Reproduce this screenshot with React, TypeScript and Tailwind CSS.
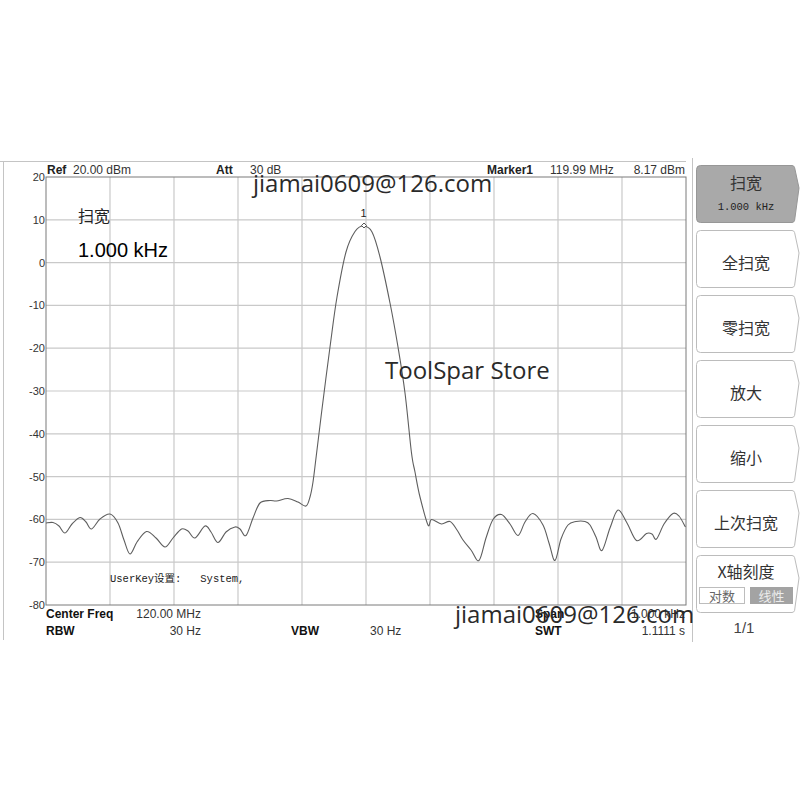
import React from "react"

// trace points in screen coordinates (px)
const TRACE: [number, number][] = [
  [46, 523], [53, 522.5], [59, 526], [65, 533], [72, 524], [80, 517.5], [86, 522], [91.5, 529],
  [100, 519], [110, 514], [118, 523], [124, 540], [130, 554], [137, 542], [146.5, 531.5],
  [156, 538], [165, 547], [173, 538], [181.5, 529], [188, 531], [195, 538], [205, 526],
  [211, 532], [218, 542.5], [226, 532], [235, 527], [240, 529], [246, 535.5], [253, 518],
  [260, 503], [270, 500.5], [276.5, 501], [288, 498.5], [298, 502], [306, 506], [310, 497],
  [313, 482], [316, 458], [321.5, 413], [330, 347], [337, 297], [346, 252], [355, 231.5],
  [363.5, 226], [372, 232], [380, 257], [390, 303], [398, 347],
  [405, 393], [411.5, 453], [415, 472], [420, 497], [428, 525], [431.5, 519.5], [441.5, 524],
  [450, 521.5], [457, 530], [463, 540], [471, 550], [479, 560.5], [486, 538], [493, 519.5],
  [501.5, 514.5], [510, 524], [518, 535.5], [525, 522], [533, 513.5], [543, 525], [549, 543],
  [555, 560.5], [561, 539], [568, 525], [576, 521.5], [585, 521.5], [590, 525], [596, 537],
  [602, 550.5], [610, 528], [618, 510], [627, 523], [636.5, 540.5], [646.5, 533.5], [652, 534],
  [656.5, 539], [664, 524], [673, 513.5], [679, 516], [685.5, 527],
]

function smoothPath(pts: [number, number][]) {
  let d = `M${pts[0][0]},${pts[0][1]}`
  for (let i = 0; i < pts.length - 1; i++) {
    const p0 = pts[i - 1] ?? pts[i]
    const p1 = pts[i]
    const p2 = pts[i + 1]
    const p3 = pts[i + 2] ?? p2
    const c1x = p1[0] + (p2[0] - p0[0]) / 6
    const c1y = p1[1] + (p2[1] - p0[1]) / 6
    const c2x = p2[0] - (p3[0] - p1[0]) / 6
    const c2y = p2[1] - (p3[1] - p1[1]) / 6
    d += ` C${c1x.toFixed(1)},${c1y.toFixed(1)} ${c2x.toFixed(1)},${c2y.toFixed(1)} ${p2[0]},${p2[1]}`
  }
  return d
}

const PLOT_L = 46
const PLOT_T = 177
const COL = 64
const ROW = 42.8

function SpectrumPlot() {
  const cols = Array.from({ length: 9 }, (_, i) => PLOT_L + COL * (i + 1))
  const rows = Array.from({ length: 9 }, (_, i) => PLOT_T + ROW * (i + 1))
  const labels = Array.from({ length: 11 }, (_, i) => ({ v: 20 - 10 * i, y: PLOT_T + ROW * i }))

  return (
    <svg
      width="682"
      height="429"
      viewBox="4 177 682 429"
      className="block overflow-visible"
      fontFamily="'Liberation Sans', sans-serif"
    >
      {cols.map((x) => (
        <line key={x} x1={x} y1={PLOT_T} x2={x} y2={PLOT_T + ROW * 10} stroke="#c9c9c9" strokeWidth="1.2" />
      ))}
      {rows.map((y) => (
        <line key={y} x1={PLOT_L} y1={y} x2={PLOT_L + COL * 10} y2={y} stroke="#c9c9c9" strokeWidth="1.2" />
      ))}
      <rect x={PLOT_L} y={PLOT_T} width={COL * 10} height={ROW * 10} fill="none" stroke="#7a7a7a" strokeWidth="1" />
      {labels.map((l) => (
        <text key={l.v} x="45" y={l.y + 4} textAnchor="end" fontSize="11" fill="#333">
          {l.v}
        </text>
      ))}
      <path d={smoothPath(TRACE)} fill="none" stroke="#5e5e5e" strokeWidth="1.1" />
      <path d="M364,223 L366.5,225.5 L364,228 L361.5,225.5 Z" fill="#fff" stroke="#444" strokeWidth="0.9" />
      <text x="363.5" y="217" textAnchor="middle" fontSize="11" fill="#222">
        1
      </text>
    </svg>
  )
}

function SoftKey({ active, children }: { active?: boolean; children: React.ReactNode }) {
  return (
    <div className="relative h-[58px] w-[104px]">
      <svg className="absolute inset-0" width="104" height="58" viewBox="0 0 104 58">
        <path
          d="M4.5,0.5 H96 Q98,0.5 98.6,2.6 L103,23 L98.6,55.4 Q98,57.5 96,57.5 H4.5 Q0.5,57.5 0.5,53.5 V4.5 Q0.5,0.5 4.5,0.5 Z"
          fill={active ? "#a9a9a9" : "#ffffff"}
          stroke={active ? "#979797" : "#bcbcbc"}
          strokeWidth="1"
        />
      </svg>
      <div className="relative flex h-full w-[100px] flex-col items-center justify-center">{children}</div>
    </div>
  )
}

const cjk = "font-['Noto_Sans_CJK_SC',sans-serif] text-[16px] text-[#333]"

export default function App() {
  return (
    <div className="relative h-[800px] w-[800px] overflow-hidden bg-white pt-[158px] font-['Liberation_Sans','Noto_Sans_CJK_SC',sans-serif]">
      <div className="flex h-[484px]">
        {/* analyzer screen */}
        <div className="w-[692px] pt-[3px]">
          <div className="h-[479px] w-[686px] border-t border-[#c4c4c4] pl-[3px]">
            <div className="h-full border-l border-[#c4c4c4]">
              <div className="flex h-[15px] items-end pl-[43px] pr-[1px] text-[12px] leading-[13px] text-[#222]">
                <span className="w-[26px] font-bold">Ref</span>
                <span className="w-[143px] text-[#333]">20.00 dBm</span>
                <span className="w-[34px] font-bold">Att</span>
                <span className="text-[#333]">30 dB</span>
                <span className="ml-auto w-[63px] font-bold">Marker1</span>
                <span className="w-[78px] text-[#333]">119.99 MHz</span>
                <span className="w-[57px] text-right text-[#333]">8.17 dBm</span>
              </div>

              <div className="relative h-[429px]">
                <SpectrumPlot />
                <div className="absolute left-[74px] top-[28px] font-['Noto_Sans_CJK_SC',sans-serif] text-[16px] leading-[20px] text-[#222]">
                  扫宽
                </div>
                <div className="absolute left-[74px] top-[61px] text-[20px] leading-[24px] text-black">1.000 kHz</div>
                <div className="absolute left-[106px] top-[395px] whitespace-pre font-['Liberation_Mono','Noto_Sans_CJK_SC',monospace] text-[10.5px] leading-[14px] text-[#222]">
                  {"UserKey设置:   System,"}
                </div>
              </div>

              <div className="pl-[42px] pr-[1px] text-[12px] leading-[17px] text-[#333]">
                <div className="flex h-[17px]">
                  <div className="flex w-[155px] justify-between">
                    <span className="font-bold text-[#111]">Center Freq</span>
                    <span>120.00 MHz</span>
                  </div>
                  <div className="ml-auto flex w-[150px] justify-between">
                    <span className="font-bold text-[#111]">Span</span>
                    <span>1.000 kHz</span>
                  </div>
                </div>
                <div className="flex h-[17px]">
                  <div className="flex w-[155px] justify-between">
                    <span className="font-bold text-[#111]">RBW</span>
                    <span>30 Hz</span>
                  </div>
                  <div className="ml-[90px] flex">
                    <span className="w-[79px] font-bold text-[#111]">VBW</span>
                    <span>30 Hz</span>
                  </div>
                  <div className="ml-auto flex w-[150px] justify-between">
                    <span className="font-bold text-[#111]">SWT</span>
                    <span>1.1111 s</span>
                  </div>
                </div>
              </div>
            </div>
          </div>
        </div>

        {/* soft keys */}
        <div className="flex w-[108px] flex-col gap-[7px] border-l border-[#c4c4c4] pl-[3px] pt-[7px]">
          <SoftKey active>
            <span className={`${cjk} -mt-[4px] leading-[22px]`}>扫宽</span>
            <span className="mt-[8px] font-['Liberation_Mono',monospace] text-[10.5px] leading-[12px] text-[#222]">
              1.000 kHz
            </span>
          </SoftKey>
          <SoftKey>
            <span className={`${cjk} mt-[6px]`}>全扫宽</span>
          </SoftKey>
          <SoftKey>
            <span className={`${cjk} mt-[6px]`}>零扫宽</span>
          </SoftKey>
          <SoftKey>
            <span className={`${cjk} mt-[6px]`}>放大</span>
          </SoftKey>
          <SoftKey>
            <span className={`${cjk} mt-[6px]`}>缩小</span>
          </SoftKey>
          <SoftKey>
            <span className={`${cjk} mt-[6px]`}>上次扫宽</span>
          </SoftKey>
          <SoftKey>
            <span className={`${cjk} -mt-[4px] leading-[22px]`}>X轴刻度</span>
            <div className="mt-[5px] flex w-[94px] justify-between">
              <span className="flex h-[17px] w-[46px] items-center justify-center border border-[#bdbdbd] bg-white font-['Noto_Sans_CJK_SC',sans-serif] text-[13px] text-[#666]">
                对数
              </span>
              <span className="flex h-[17px] w-[43px] items-center justify-center bg-[#a3a3a3] font-['Noto_Sans_CJK_SC',sans-serif] text-[13px] text-[#ececec]">
                线性
              </span>
            </div>
          </SoftKey>
          <div className="-mt-[1px] pr-[8px] text-center text-[15px] leading-[18px] text-[#444]">1/1</div>
        </div>
      </div>

      {/* watermarks */}
      <div className="absolute left-[253px] top-[171px] font-['Open_Sans',sans-serif] text-[24px] leading-[24px] text-[#2a2a2a]">
        jiamai0609@126.com
      </div>
      <div className="absolute left-[385px] top-[358px] font-['Open_Sans',sans-serif] text-[24px] leading-[24px] text-[#2a2a2a]">
        ToolSpar Store
      </div>
      <div className="absolute left-[455px] top-[602px] font-['Open_Sans',sans-serif] text-[24px] leading-[24px] text-[#2a2a2a]">
        jiamai0609@126.com
      </div>
    </div>
  )
}
